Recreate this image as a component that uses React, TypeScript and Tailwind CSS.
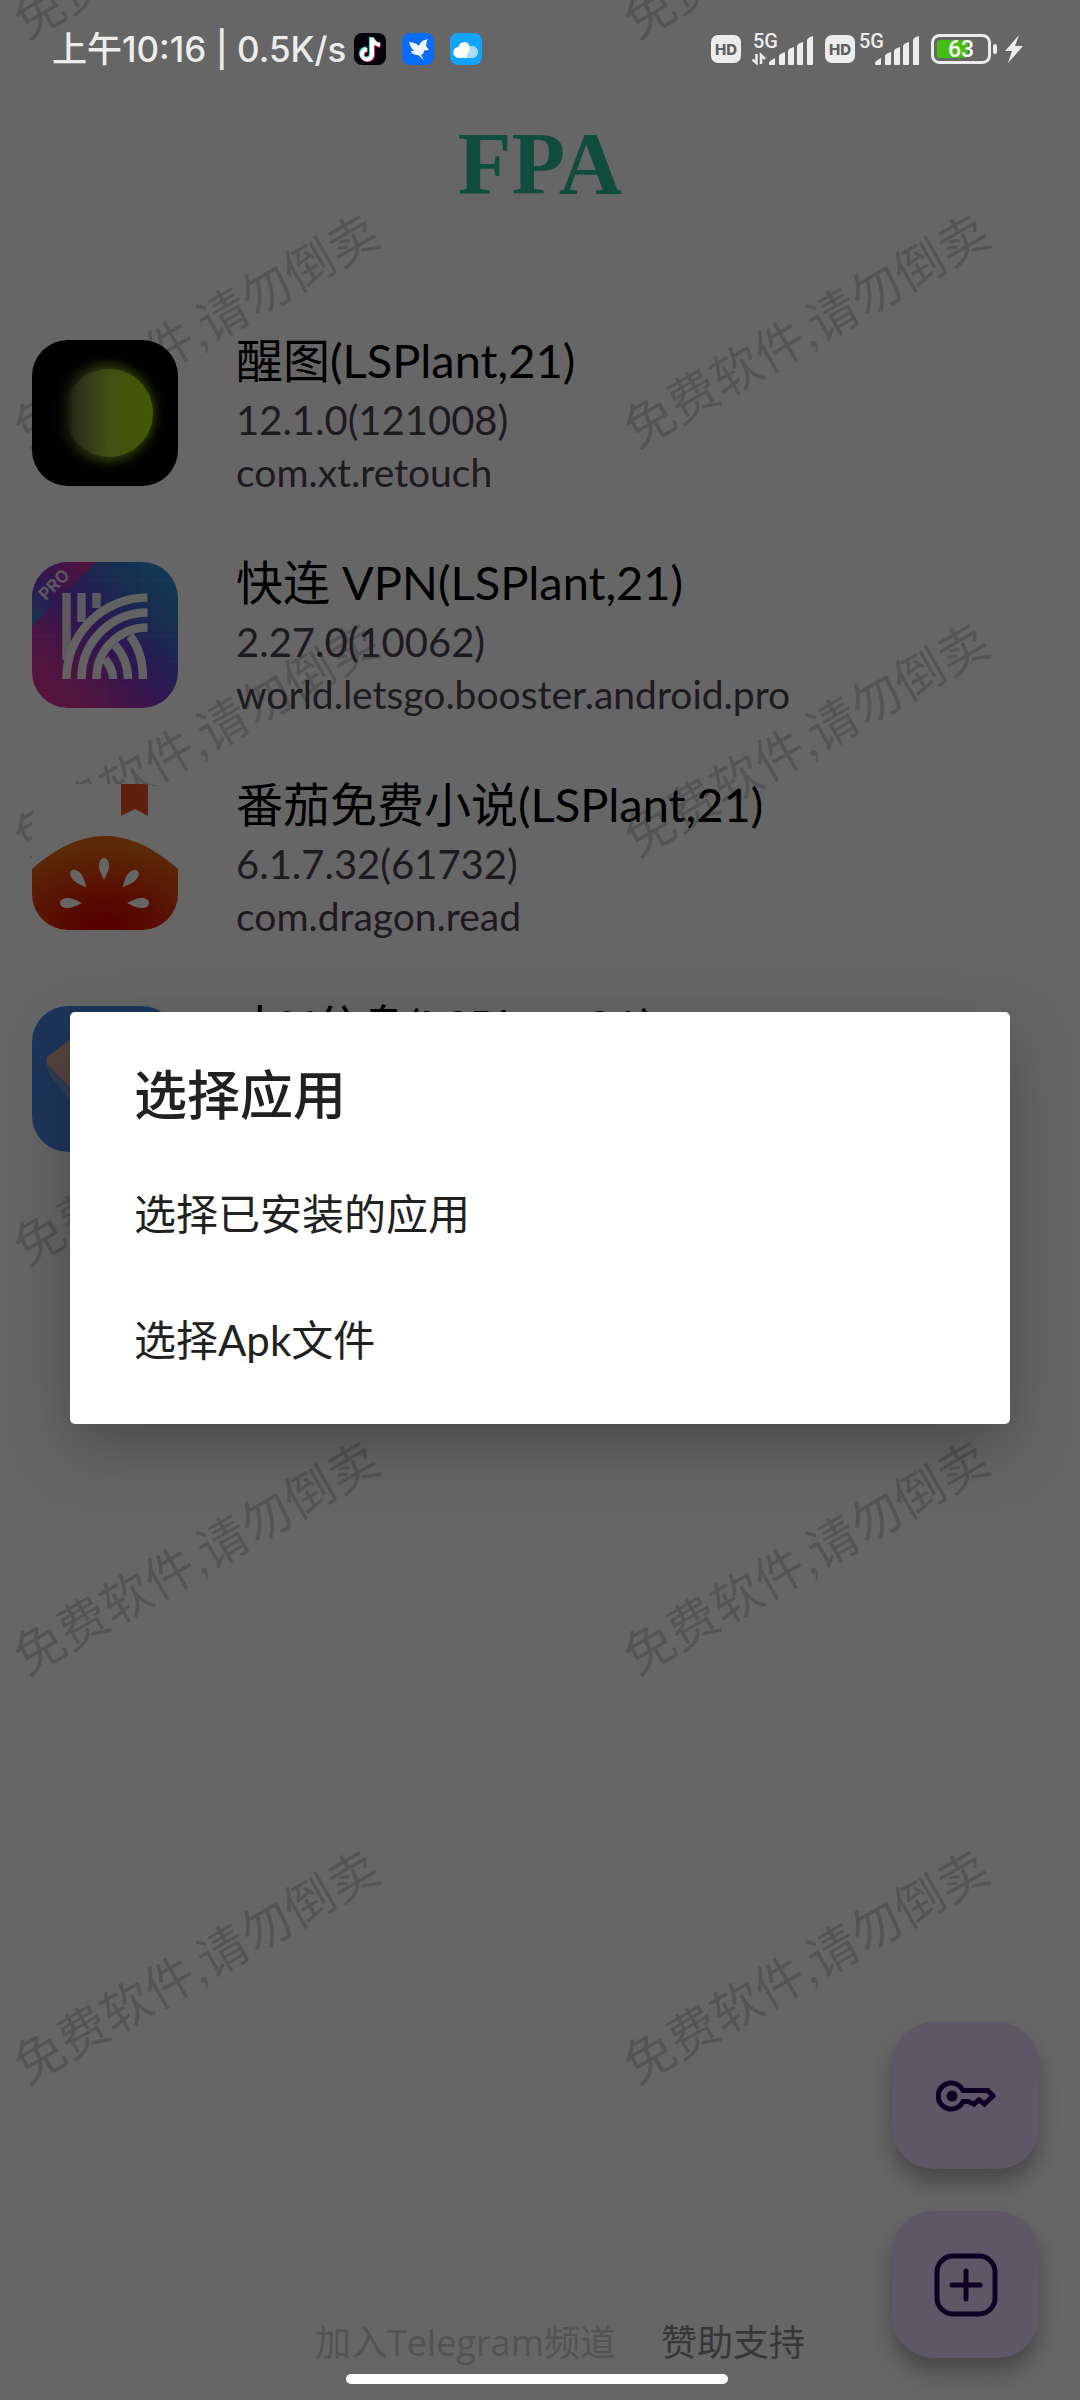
import type { ReactNode } from "react";

type AppEntry = {
  name: string;
  version?: string;
  pkg?: string;
  icon: ReactNode;
};

const WATERMARK = "免费软件,请勿倒卖";

function RetouchIcon() {
  return (
    <svg viewBox="0 0 146 146" className="block size-full">
      <defs>
        <linearGradient id="rtFill" x1="0" y1="0" x2="1" y2="0">
          <stop offset="0" stopColor="#8f9a58" stopOpacity="0" />
          <stop offset="0.2" stopColor="#84904a" stopOpacity="0.7" />
          <stop offset="0.5" stopColor="#a2c830" />
          <stop offset="1" stopColor="#a8de08" />
        </linearGradient>
        <filter id="rtBlur" x="-30%" y="-30%" width="160%" height="160%">
          <feGaussianBlur stdDeviation="7" />
        </filter>
      </defs>
      <rect width="146" height="146" fill="#000" />
      <circle cx="74" cy="73" r="47" fill="url(#rtFill)" filter="url(#rtBlur)" />
      <circle cx="77" cy="73" r="44" fill="url(#rtFill)" />
    </svg>
  );
}

function VpnIcon() {
  return (
    <svg viewBox="0 0 146 146" className="block size-full">
      <defs>
        <linearGradient id="vpnBg" x1="0" y1="1" x2="1" y2="0">
          <stop offset="0" stopColor="#e0308c" />
          <stop offset="0.25" stopColor="#c034a0" />
          <stop offset="0.52" stopColor="#683cd0" />
          <stop offset="0.8" stopColor="#347cc8" />
          <stop offset="1" stopColor="#3094d0" />
        </linearGradient>
        <linearGradient id="vpnTag" x1="0" y1="1" x2="1" y2="0">
          <stop offset="0" stopColor="#3088d0" />
          <stop offset="0.4" stopColor="#743cc8" />
          <stop offset="1" stopColor="#e02c90" />
        </linearGradient>
      </defs>
      <rect width="146" height="146" fill="url(#vpnBg)" />
      <g stroke="#fff" strokeOpacity="0.08" strokeWidth="1">
        <path d="M0 18H146M0 74H146M0 99H146M0 126H146M74 0V146M110 0V146" />
      </g>
      <path d="M0 0H64L0 64Z" fill="url(#vpnTag)" />
      <g fill="none" stroke="#f4f4f4" strokeWidth="8.500">
        <path d="M34.500 31V98M49.500 31V60M64.500 31V46" stroke="#e4e0ec" />
        <path d="M111 117C111 98 106 84 98 74M96 117C96 104 91 92 83 83M81 117C81 110 78 103 73 97" />
        <path d="M34.500 117A81 81 0 0 1 115.500 35.500M49.500 117A66 66 0 0 1 115.500 50.500M64.500 117A51 51 0 0 1 115.500 65.500" />
      </g>
      <text
        x="23"
        y="29"
        transform="rotate(-45 22 24)"
        textAnchor="middle"
        fontSize="17"
        fontWeight="700"
        fill="#e0d4f0"
        fontFamily="Inter, sans-serif"
      >
        PRO
      </text>
    </svg>
  );
}

function NovelIcon() {
  const seed = "M0 11C-4 3-5 0-5-3C-5-8-3-11 0-11S5-8 5-3C5 0 4 3 0 11Z";
  return (
    <svg viewBox="0 0 146 146" className="block size-full">
      <defs>
        <radialGradient id="tomato" cx="0.5" cy="0.95" r="0.85">
          <stop offset="0" stopColor="#d40000" />
          <stop offset="0.35" stopColor="#dc1c04" />
          <stop offset="1" stopColor="#e46a12" />
        </radialGradient>
      </defs>
      <rect width="146" height="146" fill="#fff" />
      <path d="M89 0H116V32L103 25L89 32Z" fill="#f0502a" />
      <path d="M0 85C26 62 50 52 73 52S120 62 146 85V146H0Z" fill="url(#tomato)" />
      <g fill="#fff">
        <path d={seed} transform="translate(72 85)" />
        <path d={seed} transform="translate(47 95) rotate(-42)" />
        <path d={seed} transform="translate(98 95) rotate(42)" />
        <path d={seed} transform="translate(39 119) rotate(-90)" />
        <path d={seed} transform="translate(106 119) rotate(90)" />
      </g>
    </svg>
  );
}

function CloneIcon() {
  return (
    <svg viewBox="0 0 146 146" className="block size-full">
      <rect width="146" height="146" fill="#4a88e4" />
      <path d="M14 56L18 70L73 134L128 70L132 56Z" fill="#7a9ed4" />
      <path d="M16 50L73 8L130 50L73 116L16 59Q13 54 16 50Z" fill="#d4aca0" />
    </svg>
  );
}

const apps: AppEntry[] = [
  {
    name: "醒图(LSPlant,21)",
    version: "12.1.0(121008)",
    pkg: "com.xt.retouch",
    icon: <RetouchIcon />,
  },
  {
    name: "快连 VPN(LSPlant,21)",
    version: "2.27.0(10062)",
    pkg: "world.letsgo.booster.android.pro",
    icon: <VpnIcon />,
  },
  {
    name: "番茄免费小说(LSPlant,21)",
    version: "6.1.7.32(61732)",
    pkg: "com.dragon.read",
    icon: <NovelIcon />,
  },
  { name: "小X分身(LSPlant,21)", icon: <CloneIcon /> },
];

function HdBadge() {
  return (
    <span className="flex h-7 w-[30px] items-center justify-center rounded-[7px] bg-[#ececec] text-[15px] leading-none font-extrabold text-[#606060] font-['Inter',sans-serif]">
      HD
    </span>
  );
}

function Signal({ data = false }: { data?: boolean }) {
  return (
    <svg
      viewBox={data ? "-8 0 70 36" : "0 0 62 36"}
      className={data ? "h-9 w-[70px]" : "h-9 w-[62px]"}
      fill="#ececec"
    >
      <text x="1" y="17" fontSize="20" fontWeight="500" fontFamily="Roboto, sans-serif">
        5G
      </text>
      <path d="M17 32Q17 30 23 27V33Q23 34 22 34H18Q17 34 17 33ZM27 25Q27 23 33 21V33Q33 34 32 34H28Q27 34 27 33ZM36 20Q37 17 42 16V33Q42 34 41 34H37Q36 34 36 33ZM45 15Q46 12 51 11V33Q51 34 50 34H46Q45 34 45 33ZM55 9Q56 6 61 5V33Q61 34 60 34H56Q55 34 55 33Z" />
      {data && (
        <path
          d="M4.500 23V32L0.500 28.500M9 33V24L13 28"
          fill="none"
          stroke="#ececec"
          strokeWidth="2.500"
        />
      )}
    </svg>
  );
}

function StatusBar() {
  return (
    <div className="relative z-20 flex h-[98px] items-center justify-between pr-[57px] pl-[52px] text-[#ececec]">
      <div className="flex items-center gap-4">
        <span className="-mr-2 text-[35px] leading-10 font-medium whitespace-nowrap font-['Inter','Noto_Sans_CJK_SC',sans-serif]">
          上午10:16 | 0.5K/s
        </span>
        <svg viewBox="0 0 32 32" className="size-8">
          <rect width="32" height="32" rx="8" fill="#05020c" />
          <g fill="none" strokeWidth="4">
            <path d="M17 4V20.500A5 5 0 1 1 12 15.500M17 5C18 9 21 11 25.500 11.500" stroke="#25e8e4" />
            <path d="M19 6V22A5 5 0 1 1 14 17M19 6C20 10 22 12 26.500 13" stroke="#f5265a" />
            <path d="M18 5V21.500A5 5 0 1 1 13 16.500M18 5C19 9 22 11 26 12" stroke="#fff" />
          </g>
        </svg>
        <svg viewBox="0 0 32 32" className="size-8">
          <rect width="32" height="32" rx="8" fill="#0a6cff" />
          <path
            d="M7 9C10 9 14 10 17 13C18 9 21 7 26 6C24 9 25 10 24 13L27 17L22 17.500C22 20 21 21 19 22L22 27L16 22C12 22 9 20 9 18H12C9 15 8 12 7 9Z"
            fill="#eef5ff"
          />
        </svg>
        <svg viewBox="0 0 32 32" className="size-8">
          <rect width="32" height="32" rx="8" fill="#12a4fa" />
          <circle cx="22" cy="19" r="6" fill="#a8defc" />
          <path d="M9 25A5.500 5.500 0 0 1 8.500 14A6 6 0 0 1 19.500 12V25Z" fill="#fff" />
          <path d="M17 25H22A6 6 0 0 0 27 16L17 20Z" fill="#a8defc" />
        </svg>
      </div>

      <div className="flex items-center gap-[11px]">
        <div className="flex items-center gap-[3px]">
          <HdBadge />
          <Signal data />
        </div>
        <div className="flex items-center gap-[3px]">
          <HdBadge />
          <Signal />
        </div>
        <svg viewBox="0 0 92 30" className="h-[30px] w-[92px]">
          <rect x="1.500" y="1.500" width="57" height="27" rx="7" fill="none" stroke="#ececec" strokeWidth="3" />
          <rect x="6" y="6" width="31" height="18" rx="3" fill="#46bd12" />
          <rect x="62" y="10" width="4" height="10" rx="2" fill="#ececec" />
          <text
            x="30"
            y="23"
            textAnchor="middle"
            fontSize="23"
            fontWeight="500"
            fill="#fff"
            fontFamily="Roboto, sans-serif"
          >
            63
          </text>
          <path d="M88 1L74 17H81L77 29L92 12H84Z" fill="#ececec" />
        </svg>
      </div>
    </div>
  );
}

function Watermarks() {
  return (
    <div className="pointer-events-none absolute inset-0 overflow-hidden" aria-hidden="true">
      <div className="absolute -top-[284px] -left-[109px] grid grid-cols-[610px_610px] auto-rows-[409px]">
        {Array.from({ length: 12 }, (_, i) => (
          <div key={i} className="flex items-center justify-center">
            <span className="-rotate-30 text-[50px] leading-none whitespace-nowrap text-black/18">
              {WATERMARK}
            </span>
          </div>
        ))}
      </div>
    </div>
  );
}

export default function App() {
  return (
    <div className="relative flex min-h-screen flex-col overflow-hidden bg-white font-['Lato','Noto_Sans_CJK_SC',sans-serif]">
      <Watermarks />
      <StatusBar />

      <h1 className="relative text-center text-[88px] leading-[132px] font-bold text-[#28c09a] font-['Liberation_Serif',serif]">
        FPA
      </h1>

      {/* App list */}
      <ul className="relative mt-[102px] flex flex-col gap-[52px] px-8">
        {apps.map((app) => (
          <li key={app.name} className="flex h-[170px] items-start gap-[58px]">
            <div className="mt-2 size-[146px] shrink-0 overflow-hidden rounded-[36px]">
              {app.icon}
            </div>
            <div className="min-w-0">
              <p className="text-[47px] leading-[56px] text-black">{app.name}</p>
              <p className="text-[40px] leading-[64px] text-[#49454f]">{app.version}</p>
              <p className="text-[39px] leading-[40px] text-[#49454f]">{app.pkg}</p>
            </div>
          </li>
        ))}
      </ul>

      {/* Footer links */}
      <footer className="relative mt-auto mb-[30px] flex justify-center gap-[45px] pl-10 text-[36px] leading-[54px] font-['Open_Sans','Noto_Sans_CJK_SC',sans-serif]">
        <a href="#telegram" className="text-[#cfcfcf]">
          加入Telegram频道
        </a>
        <a href="#support" className="text-[#8a8a8a]">
          赞助支持
        </a>
      </footer>

      {/* Floating buttons */}
      <div className="absolute right-[41px] bottom-[42px] flex flex-col gap-[42px]">
        <button
          type="button"
          aria-label="密钥"
          className="flex size-[147px] items-center justify-center rounded-[42px] bg-[#eaddff] text-[#21005d] shadow-[0_14px_22px_rgba(0,0,0,0.3)]"
        >
          <svg viewBox="0 0 60 32" className="h-8 w-[60px]" fill="none" stroke="currentColor">
            <path
              d="M27 10.500A13 13 0 1 0 27 21.500H32L38 24L43 20L48.500 24L57 16L52 10.500Z"
              strokeWidth="5"
            />
            <circle cx="16" cy="16" r="5.500" fill="currentColor" stroke="none" />
          </svg>
        </button>
        <button
          type="button"
          aria-label="添加"
          className="flex size-[147px] items-center justify-center rounded-[42px] bg-[#eaddff] text-[#21005d] shadow-[0_14px_22px_rgba(0,0,0,0.3)]"
        >
          <svg viewBox="0 0 64 64" className="size-16" fill="none" stroke="currentColor" strokeWidth="5">
            <rect x="3" y="3" width="58" height="58" rx="16" />
            <path d="M32 18V46M18 32H46" strokeLinecap="round" />
          </svg>
        </button>
      </div>

      {/* Dialog */}
      <div className="absolute inset-0 z-10 flex items-center justify-center bg-black/60 px-[70px] pt-9">
        <div
          role="dialog"
          aria-labelledby="dialog-title"
          className="w-full rounded-[5px] bg-white pb-[21px] text-[#212121] shadow-[0_24px_64px_rgba(0,0,0,0.27)]"
        >
          <h2 id="dialog-title" className="px-16 pt-[50px] pb-[23px] text-[53px] leading-[66px] font-medium">
            选择应用
          </h2>
          <button type="button" className="block w-full px-16 text-left text-[42px] leading-[126px]">
            选择已安装的应用
          </button>
          <button type="button" className="block w-full px-16 text-left text-[42px] leading-[126px]">
            选择Apk文件
          </button>
        </div>
      </div>

      {/* Gesture bar */}
      <div className="absolute inset-x-0 bottom-4 z-20 flex justify-center pr-1.5">
        <div className="h-[10px] w-[382px] rounded-full bg-white" />
      </div>
    </div>
  );
}
